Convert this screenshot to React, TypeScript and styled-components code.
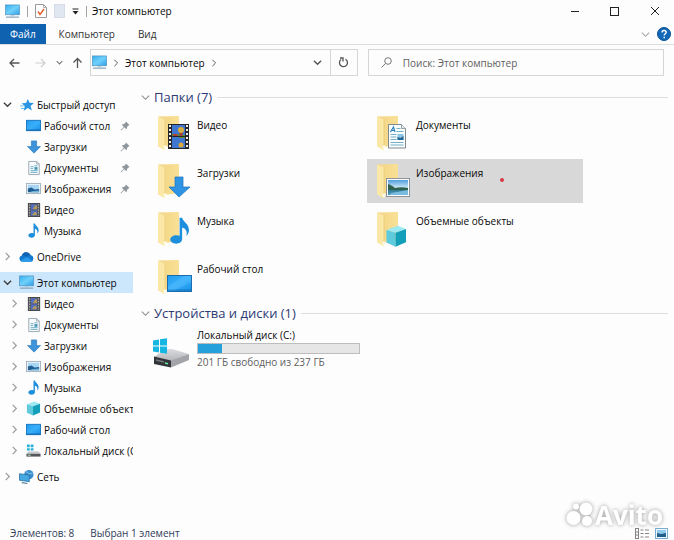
import React from "react";
import styled, { createGlobalStyle } from "styled-components";

const GlobalStyle = createGlobalStyle`
  * { box-sizing: border-box; }
  html, body, #root { height: 100%; }
  body {
    margin: 0;
    background: #fdfdfd;
    color: #080808;
    font: 10px/20px "Open Sans", "Noto Sans", sans-serif;
  }
  button, input { font: inherit; color: inherit; }
  ul { list-style: none; margin: 0; padding: 0; }
`;

const PlainButton = styled.button`
  display: flex;
  align-items: center;
  justify-content: center;
  padding: 0;
  border: 0;
  background: none;
`;

const Svg = styled.svg`
  display: block;
  flex: none;
  overflow: visible;
`;

/* ---------- icons ---------- */

const Defs = () => (
  <Svg width="0" height="0" aria-hidden="true">
    <defs>
      <linearGradient id="screen" x1="0" y1="0" x2="1" y2="1">
        <stop offset="0" stopColor="#35aef0" />
        <stop offset="0.5" stopColor="#6fd0fb" />
        <stop offset="1" stopColor="#2f9fe6" />
      </linearGradient>
      <linearGradient id="desk" x1="0" y1="0" x2="1" y2="1">
        <stop offset="0" stopColor="#1f9bf0" />
        <stop offset="0.5" stopColor="#3aaff9" />
        <stop offset="1" stopColor="#1590ea" />
      </linearGradient>
      <linearGradient id="folder" x1="0" y1="0" x2="1" y2="0">
        <stop offset="0" stopColor="#f3d583" />
        <stop offset="1" stopColor="#f9e096" />
      </linearGradient>
      <linearGradient id="sky" x1="0" y1="0" x2="0" y2="1">
        <stop offset="0" stopColor="#4f9ddb" />
        <stop offset="0.5" stopColor="#cbe7f5" />
        <stop offset="0.6" stopColor="#2f6f86" />
        <stop offset="1" stopColor="#4b9fc4" />
      </linearGradient>
      <linearGradient id="metal" x1="0" y1="0" x2="0" y2="1">
        <stop offset="0" stopColor="#dcdcdf" />
        <stop offset="1" stopColor="#b4b5b9" />
      </linearGradient>
    </defs>
  </Svg>
);

type ChevronProps = { dir: "right" | "down"; size?: number; color?: string; weight?: number };
const Chevron = ({ dir, size = 9, color = "#8c8c8c", weight = 1.2 }: ChevronProps) => (
  <Svg width={size} height={size} viewBox="0 0 10 10" fill="none" stroke={color} strokeWidth={weight} aria-hidden="true">
    <path d={dir === "right" ? "M3 1l4 4-4 4" : "M1 3l4 4 4-4"} />
  </Svg>
);

const PcIcon = () => (
  <Svg width="15" height="15" viewBox="0 0 16 16" aria-hidden="true">
    <rect x="0.5" y="1" width="15" height="10.5" fill="url(#screen)" stroke="#4d8fbd" strokeWidth="0.7" />
    <path d="M6 12h4v1H6z" fill="#a9c4d6" />
    <path d="M1 14h14" stroke="#7c9db5" strokeWidth="1.2" />
  </Svg>
);

const StarIcon = () => (
  <Svg width="14" height="14" viewBox="0 0 16 16" aria-hidden="true">
    <path d="M9 1l1.900 4.500 5 .3-3.800 3.300 1.400 5.200L9 11.500l-4.800 3 1.200-5.200L2 6l4.900-.4z" fill="#2a94e2" />
    <path d="M0 9h4M1 12h3.500" stroke="#58b2ee" />
  </Svg>
);

const DesktopIcon = () => (
  <Svg width="15" height="15" viewBox="0 0 16 16" aria-hidden="true">
    <rect x="0.5" y="2.5" width="15" height="11" fill="url(#desk)" stroke="#1876bd" />
    <path d="M1 12.800h14" stroke="#0c5c9d" strokeWidth="0.8" />
  </Svg>
);

const DownloadIcon = () => (
  <Svg width="14" height="14" viewBox="0 0 16 16" aria-hidden="true">
    <path d="M5 1h6v6.500h4.500L8 15 .5 7.500H5z" fill="#3f93d8" stroke="#2779bd" strokeWidth="0.7" />
  </Svg>
);

const DocumentIcon = () => (
  <Svg width="14" height="14" viewBox="0 0 16 16" aria-hidden="true">
    <path d="M2 .5h9l3 3v12H2z" fill="#f7fbfd" stroke="#87969f" strokeWidth="0.9" />
    <path d="M11 .5v3h3" fill="none" stroke="#87969f" strokeWidth="0.8" />
    <path d="M4 6.500h3.500M4 8.500h3M8.500 5.500h3.500M4 11h8M4 13h8" stroke="#5ca5bd" />
    <path d="M8.500 7h3.500v3H8.500z" fill="#3e93b5" />
  </Svg>
);

const PictureIcon = () => (
  <Svg width="15" height="15" viewBox="0 0 16 16" aria-hidden="true">
    <rect x="0.5" y="2.5" width="15" height="11" fill="#f5f9fc" stroke="#8fa0ad" strokeWidth="0.8" />
    <rect x="2" y="4" width="12" height="8" fill="#a7d5f4" />
    <path d="M2 8l4-1 3 2 5-.5V12H2z" fill="#245f94" />
    <path d="M6 11l8-1v2H5z" fill="#6db3dc" />
  </Svg>
);

const VideoIcon = () => (
  <Svg width="14" height="14" viewBox="0 0 16 16" aria-hidden="true">
    <rect x="1.5" y="0.5" width="13" height="15" fill="#55565c" stroke="#3e3f45" />
    <rect x="4.5" y="1.5" width="7" height="6" fill="#526fc1" />
    <rect x="4.5" y="8.5" width="7" height="6" fill="#526fc1" />
    <path d="M7 6l3-4 1.500 2v3H7zM6 13l3-3 2 1v3H6z" fill="#b49b59" />
    <path d="M3 1.500v13M13 1.500v13" stroke="#d5d5d5" strokeDasharray="1.500 1.500" />
  </Svg>
);

const NotePath = () => (
  <path d="M8 .5h1.500c.4 2.500 4.200 3.500 4 7.500-.1 1.500-.7 2.500-1.500 3.200.7-2.700-.4-4.400-2.500-5V13c0 1.700-1.700 2.700-3.500 2.700S2.500 14.700 2.500 13.300c0-1.900 2.800-3.200 5.500-2.200z" fill="#1d8fdc" />
);
const MusicIcon = () => (
  <Svg width="15" height="15" viewBox="0 0 16 16" aria-hidden="true"><NotePath /></Svg>
);

const CubeShapes = () => (
  <>
    <path d="M1 3.500L9 .5l6 2.300L7.500 5.500z" fill="#9ce9f2" />
    <path d="M1 3.500l6.500 2v10L1 12.500z" fill="#5fcadb" />
    <path d="M15 2.800L7.500 5.500v10L15 12.300z" fill="#149fb9" />
  </>
);
const CubeIcon = () => (
  <Svg width="15" height="15" viewBox="0 0 16 16" aria-hidden="true"><CubeShapes /></Svg>
);

const CloudIcon = () => (
  <Svg width="15" height="15" viewBox="0 0 16 16" aria-hidden="true">
    <path d="M3.500 13.500A3.300 3.300 0 0 1 3 7a5 5 0 0 1 9.300-.7 3.700 3.700 0 0 1 .4 7.200z" fill="#1379cf" />
    <path d="M3 7a5 5 0 0 1 9.300-.7c-2 .2-3 1-3.800 2.200C7 7.300 5 6.600 3 7z" fill="#0f62b1" />
    <path d="M1.500 12.500l7-4 6 4.200c-.5.500-1 .8-1.800.8H3.500c-.8 0-1.500-.4-2-1z" fill="#2a9aea" />
  </Svg>
);

const MiniDiskIcon = () => (
  <Svg width="15" height="15" viewBox="0 0 16 16" aria-hidden="true">
    <path d="M1 1.500h3v3H1zM5 1.500h3v3H5zM1 5.500h3v2.500H1zM5 5.500h3v2.500H5z" fill="#25b2d8" />
    <path d="M2.500 9h11l2 2.500h-15z" fill="#c4c6c8" />
    <path d="M.5 11.500h15v3H.5z" fill="#55585b" />
    <path d="M2 13h3" stroke="#bfe6c8" />
  </Svg>
);

const NetworkIcon = () => (
  <Svg width="15" height="15" viewBox="0 0 16 16" aria-hidden="true">
    <circle cx="10.5" cy="6" r="5" fill="#3a8fcd" />
    <path d="M7.500 3c2 0 2 2 4 2s2-1 3-.5" stroke="#8fd3f2" fill="none" />
    <path d="M.5 5l10.500 1.500v7L.5 12z" fill="#44a9e3" stroke="#286e9f" strokeWidth="0.8" />
    <path d="M3 14.500l6 1" stroke="#56809b" strokeWidth="1.2" />
  </Svg>
);

const PinIcon = () => (
  <Svg width="10" height="10" viewBox="0 0 10 10" aria-hidden="true">
    <path d="M6 .5L9.500 4l-1 .4L7 6c.1 1-.1 1.700-.7 2.200L4.300 6.200 1 9.500.5 9l3.300-3.300-2-2C2.300 3.100 3 2.900 4 3l1.600-1.500z" fill="#8f969c" />
  </Svg>
);

const FolderBack = () => (
  <>
    <path d="M1 1.500L22 1v29L8 32z" fill="url(#folder)" />
    <path d="M1 1.500l7 3V35l-1.500-.5L1 31.500z" fill="#fbe7a6" />
    <path d="M8 4.500V32" stroke="#e9c870" strokeWidth="0.6" />
    <path d="M6 31.500L9.500 30v2.500L8 35z" fill="#fffbea" />
  </>
);

const overlays = {
  video: (
    <>
      <rect x="11" y="9" width="21" height="25" fill="#25262c" />
      <rect x="15" y="10" width="13" height="11" fill="#3f76cf" />
      <rect x="15" y="22" width="13" height="11" fill="#3f76cf" />
      <path d="M15 19h6l2 1h5v1H15zM22 22h6v1h-6z" fill="#5b8d35" />
      <circle cx="24" cy="15" r="3" fill="#d9ac3e" />
      <path d="M22 18h4l-1 3h-2zM16 19h4l1 2h-5z" fill="#a84034" />
      <circle cx="24" cy="30" r="2.5" fill="#dba83d" />
      <path d="M13 10v24M30 10v24" stroke="#f1f1e6" strokeWidth="2" strokeDasharray="2 2" />
    </>
  ),
  download: <path d="M18 14h8v10h7L22 34 12 24h6z" fill="#2e94e3" stroke="#1c74bd" strokeWidth="0.7" />,
  music: <g transform="translate(9 6) scale(1.700)"><NotePath /></g>,
  desktop: (
    <>
      <rect x="10.5" y="16.5" width="24" height="16" fill="url(#desk)" stroke="#1c6cab" />
      <path d="M11 31h23" stroke="#1170b9" />
      <path d="M11 27L27 17h7v6L18 31h-7z" fill="#5dc2ff" opacity="0.35" />
    </>
  ),
  document: (
    <>
      <path d="M12.500 9.500h13l4 4v19.500h-17z" fill="#fcfefe" stroke="#7e8a91" />
      <path d="M25.500 9.500v4h4" fill="#e6edf0" stroke="#7e8a91" strokeWidth="0.8" />
      <path d="M14.500 17l3-5 1.500 5M15.500 15.500h3" fill="none" stroke="#2a83bd" strokeWidth="1.2" />
      <path d="M20.500 13.500h4M20.500 16.500h7M14.500 19.500h6M14.500 22h6M14.500 24.500h6M14.500 27.500h13M14.500 30h13" stroke="#73aeca" />
      <path d="M21.500 19h6v6h-6z" fill="#8cc5e5" />
      <path d="M21.500 22l3 1 3-2v4h-6z" fill="#246591" />
    </>
  ),
  picture: (
    <>
      <rect x="10.5" y="15.5" width="23" height="18" fill="#fbfcfd" stroke="#8c9399" />
      <rect x="12" y="17" width="20" height="15" fill="url(#sky)" />
      <path d="M12 21c3 1 5 2 7 4 4-1 9-1 13 0v2H12z" fill="#2f624d" />
      <path d="M15 30l17-3v5H14z" fill="#79bcdd" />
    </>
  ),
  cube: <g transform="translate(9 14) scale(1.400)"><CubeShapes /></g>,
};
type FolderKind = keyof typeof overlays;

const FolderIcon = ({ kind }: { kind: FolderKind }) => (
  <Svg width="36" height="36" viewBox="0 0 36 36" aria-hidden="true">
    <FolderBack />
    {overlays[kind]}
  </Svg>
);

const DriveIcon = () => (
  <Svg width="38" height="32" viewBox="0 0 38 32" aria-hidden="true">
    <path d="M2 20l12-8h6l17 5-18 7z" fill="url(#metal)" />
    <path d="M1 3.500l6-1v6H1zM8 2.300l7-1v7.200H8zM1 9.500h6v6l-6-1zM8 9.500h7v7.200l-7-1z" fill="#16b6e2" />
    <path d="M2 19.500l17 4v7L2 27z" fill="#323439" />
    <path d="M19 23.500L37 17v6l-18 7.500z" fill="#a3a4a9" />
    <path d="M4 23l8 2" stroke="#73797b" strokeWidth="1.5" />
    <path d="M13 26l3 .7" stroke="#5ef0a0" strokeWidth="1.5" />
  </Svg>
);

/* ---------- window chrome ---------- */

const Window = styled.div`
  position: relative;
  display: flex;
  flex-direction: column;
  min-height: 100%;
  overflow: hidden;
`;

const TitleBar = styled.header`
  display: flex;
  align-items: center;
  height: 24px;
  padding: 0 14px 2px 5px;
`;

const QuickTools = styled.div`
  display: flex;
  align-items: center;
  gap: 7px;
`;

const Separator = styled.span`
  width: 1px;
  height: 11px;
  background: #a2a2a2;
`;

const Title = styled.h1`
  margin: 0 auto 0 5px;
  font-size: 10px;
  font-weight: 400;
  white-space: nowrap;
`;

const Captions = styled.div`
  display: flex;
  gap: 30px;
`;

const Ribbon = styled.nav`
  display: flex;
  align-items: stretch;
  height: 21px;
  padding-right: 3px;
  border-bottom: 1px solid #dcdcdc;
`;

const Tab = styled(PlainButton)<{ $active?: boolean }>`
  padding: 0 10px;
  margin-right: 3px;
  color: ${(p) => (p.$active ? "#fff" : "#333")};
  background: ${(p) => (p.$active ? "#0f62b0" : "none")};
`;

const RibbonEnd = styled.div`
  display: flex;
  align-items: center;
  gap: 7px;
  margin-left: auto;
`;

const NavRow = styled.div`
  display: flex;
  align-items: center;
  height: 35px;
  padding: 0 10px 0 8px;
`;

const NavButtons = styled.div`
  display: flex;
  align-items: center;
  gap: 9px;
  width: 82px;
  flex: none;
`;

const AddressBar = styled.div`
  display: flex;
  align-items: center;
  flex: 98 1 0;
  height: 27px;
  border: 1px solid #d6d6d6;
  padding-left: 1px;
`;

const Crumb = styled(PlainButton)`
  gap: 5px;
  margin-right: 5px;
  white-space: nowrap;
`;

const AddressDrop = styled(PlainButton)`
  width: 25px;
  margin-left: auto;
`;

const Refresh = styled(PlainButton)`
  width: 27px;
  height: 25px;
  border-left: 1px solid #d6d6d6;
`;

const SearchBox = styled.label`
  display: flex;
  align-items: center;
  flex: 100 1 0;
  gap: 11px;
  height: 27px;
  margin-left: 10px;
  padding: 0 12px;
  border: 1px solid #d6d6d6;
`;

const SearchInput = styled.input`
  flex: 1;
  min-width: 0;
  padding: 0;
  border: 0;
  outline: 0;
  background: none;
  &::placeholder { color: #606060; opacity: 1; }
`;

/* ---------- body ---------- */

const Body = styled.div`
  display: flex;
  flex: 1;
`;

const Sidebar = styled.aside`
  display: flex;
  flex-direction: column;
  gap: 5px;
  flex: none;
  width: 133px;
  padding-top: 14px;
  overflow: hidden;
`;

const TreeRow = styled(PlainButton)<{ $level: number; $selected?: boolean }>`
  justify-content: flex-start;
  gap: 3px;
  width: 100%;
  height: 21px;
  padding-left: ${(p) => (p.$level ? 10 : 3)}px;
  background: ${(p) => (p.$selected ? "#cce6fb" : "none")};
`;

const ArrowSlot = styled.span`
  flex: none;
  width: 13px;
`;

const IconSlot = styled.span`
  display: flex;
  justify-content: center;
  flex: none;
  width: 15px;
`;

const TreeLabel = styled.span`
  flex: 1;
  overflow: hidden;
  white-space: nowrap;
  text-align: left;
`;

const PinSlot = styled.span`
  padding-right: 3px;
`;

const Main = styled.main`
  flex: 1;
  min-width: 0;
  padding: 7px 6px 0 8px;
`;

const GroupHeader = styled.h2`
  display: flex;
  align-items: center;
  gap: 4px;
  margin: 0;
  color: #2c3a75;
  font-size: 13px;
  font-weight: 400;
  line-height: 20px;
  white-space: nowrap;
  &::after {
    content: "";
    flex: 1;
    height: 1px;
    margin-left: 1px;
    background: #dedede;
  }
`;

const Tiles = styled.ul`
  display: grid;
  grid-template-columns: repeat(auto-fill, 216px);
  gap: 4px 3px;
  padding: 4px 0 4px 7px;
`;

const Tile = styled(PlainButton)<{ $selected?: boolean }>`
  align-items: flex-start;
  justify-content: flex-start;
  gap: 4px;
  width: 100%;
  height: 44px;
  padding: 4px 0 0 9px;
  background: ${(p) => (p.$selected ? "#d8d8d8" : "none")};
`;

const Drive = styled(PlainButton)`
  align-items: flex-start;
  justify-content: flex-start;
  gap: 7px;
  padding: 4px 0 0 11px;
  text-align: left;
`;

const DriveArt = styled.span`
  padding-top: 10px;
`;

const DriveInfo = styled.span`
  display: flex;
  flex-direction: column;
  line-height: 16px;
`;

const Usage = styled.progress`
  appearance: none;
  width: 163px;
  height: 11px;
  border: 1px solid #bdbdbd;
  &::-webkit-progress-bar { background: #e6e6e6; }
  &::-webkit-progress-value { background: #26a0da; }
`;

const Muted = styled.span`
  color: #606060;
`;

const StatusBar = styled.footer`
  display: flex;
  align-items: center;
  gap: 16px;
  height: 14px;
  padding: 0 6px 0 10px;
  color: #303c5a;
  line-height: 14px;
`;

const ViewButtons = styled.span`
  display: flex;
  gap: 6px;
  margin-left: auto;
`;

const RedDot = styled.span`
  width: 4px;
  height: 4px;
  margin: 15px 0 0 13px;
  border-radius: 50%;
  background: #d83a48;
`;

const Watermark = styled.div`
  position: absolute;
  right: 11px;
  bottom: 9px;
  display: flex;
  align-items: center;
  gap: 1px;
  color: #fff;
  font: 700 26px/32px "Open Sans", sans-serif;
  filter: drop-shadow(0 0 2px #999);
  pointer-events: none;
`;

type Item = { label: string; icon: React.ReactNode; open?: boolean; arrow?: boolean; pinned?: boolean; selected?: boolean };

const groups: Item[][] = [
  [
    { label: "Быстрый доступ", icon: <StarIcon />, open: true, arrow: true },
    { label: "Рабочий стол", icon: <DesktopIcon />, pinned: true },
    { label: "Загрузки", icon: <DownloadIcon />, pinned: true },
    { label: "Документы", icon: <DocumentIcon />, pinned: true },
    { label: "Изображения", icon: <PictureIcon />, pinned: true },
    { label: "Видео", icon: <VideoIcon /> },
    { label: "Музыка", icon: <MusicIcon /> },
  ],
  [{ label: "OneDrive", icon: <CloudIcon />, arrow: true }],
  [
    { label: "Этот компьютер", icon: <PcIcon />, open: true, arrow: true, selected: true },
    { label: "Видео", icon: <VideoIcon />, arrow: true },
    { label: "Документы", icon: <DocumentIcon />, arrow: true },
    { label: "Загрузки", icon: <DownloadIcon />, arrow: true },
    { label: "Изображения", icon: <PictureIcon />, arrow: true },
    { label: "Музыка", icon: <MusicIcon />, arrow: true },
    { label: "Объемные объекты", icon: <CubeIcon />, arrow: true },
    { label: "Рабочий стол", icon: <DesktopIcon />, arrow: true },
    { label: "Локальный диск (C:)", icon: <MiniDiskIcon />, arrow: true },
  ],
  [{ label: "Сеть", icon: <NetworkIcon />, arrow: true }],
];

const folders: { label: string; kind: FolderKind; selected?: boolean }[] = [
  { label: "Видео", kind: "video" },
  { label: "Документы", kind: "document" },
  { label: "Загрузки", kind: "download" },
  { label: "Изображения", kind: "picture", selected: true },
  { label: "Музыка", kind: "music" },
  { label: "Объемные объекты", kind: "cube" },
  { label: "Рабочий стол", kind: "desktop" },
];

export default function App() {
  return (
    <Window>
      <GlobalStyle />
      <TitleBar>
        <QuickTools>
          <PcIcon />
          <Separator />
          <PlainButton aria-label="Свойства">
            <Svg width="12" height="14" viewBox="0 0 12 14">
              <path d="M.5.500h8l3 3v10H.5z" fill="#fff" stroke="#9a9a9a" />
              <path d="M8.500.500v3h3" fill="none" stroke="#9a9a9a" strokeWidth="0.8" />
              <path d="M3 7.500l2 3 4-5.500" fill="none" stroke="#e2622d" strokeWidth="1.5" />
            </Svg>
          </PlainButton>
          <PlainButton aria-label="Новая папка">
            <Svg width="11" height="14" viewBox="0 0 11 14">
              <rect x="0.5" y="0.5" width="10" height="13" fill="#e0e7f1" stroke="#d3dce8" />
            </Svg>
          </PlainButton>
          <PlainButton aria-label="Настройка панели">
            <Svg width="7" height="7" viewBox="0 0 7 7">
              <path d="M.5 1h6" stroke="#222" />
              <path d="M.5 3h6l-3 3.500z" fill="#222" />
            </Svg>
          </PlainButton>
          <Separator />
        </QuickTools>
        <Title>Этот компьютер</Title>
        <Captions>
          <PlainButton aria-label="Свернуть">
            <Svg width="10" height="10" viewBox="0 0 10 10"><path d="M1 5.500h8" stroke="#222" /></Svg>
          </PlainButton>
          <PlainButton aria-label="Развернуть">
            <Svg width="10" height="10" viewBox="0 0 10 10"><rect x="0.5" y="1.5" width="8" height="8" fill="none" stroke="#222" /></Svg>
          </PlainButton>
          <PlainButton aria-label="Закрыть">
            <Svg width="10" height="10" viewBox="0 0 10 10"><path d="M1 1l8 8M9 1L1 9" stroke="#222" /></Svg>
          </PlainButton>
        </Captions>
      </TitleBar>

      <Ribbon>
        <Tab $active>Файл</Tab>
        <Tab>Компьютер</Tab>
        <Tab>Вид</Tab>
        <RibbonEnd>
          <PlainButton aria-label="Развернуть ленту"><Chevron dir="down" color="#a4a4a4" /></PlainButton>
          <PlainButton aria-label="Справка">
            <Svg width="14" height="14" viewBox="0 0 14 14">
              <circle cx="7" cy="7" r="6.5" fill="#1167b8" stroke="#0c4f90" />
              <path d="M5 5.500c0-2.800 4.200-2.600 4.200-.2C9.200 6.800 7.200 6.700 7.200 8.500M7.200 9.700v1.500" fill="none" stroke="#fff" strokeWidth="1.4" />
            </Svg>
          </PlainButton>
        </RibbonEnd>
      </Ribbon>

      <NavRow>
        <NavButtons>
          <PlainButton aria-label="Назад">
            <Svg width="12" height="12" viewBox="0 0 12 12" fill="none" stroke="#555" strokeWidth="1.3"><path d="M11.500 6H2M6 2L2 6l4 4" /></Svg>
          </PlainButton>
          <PlainButton aria-label="Вперёд">
            <Svg width="18" height="12" viewBox="0 0 18 12" fill="none" stroke="#cfcfcf" strokeWidth="1.2"><path d="M6.500 6H16M12 2l4 4-4 4" /></Svg>
          </PlainButton>
          <PlainButton aria-label="Последние расположения"><Chevron dir="down" size={7} color="#777" weight={1.5} /></PlainButton>
          <PlainButton aria-label="Вверх">
            <Svg width="11" height="12" viewBox="0 0 11 12" fill="none" stroke="#555" strokeWidth="1.3"><path d="M5.500 11V1.500M1.500 5.500l4-4 4 4" /></Svg>
          </PlainButton>
        </NavButtons>
        <AddressBar>
          <Crumb><PcIcon /><Chevron dir="right" size={8} color="#555" /></Crumb>
          <Crumb>Этот компьютер<Chevron dir="right" size={8} color="#555" /></Crumb>
          <AddressDrop aria-label="Предыдущие расположения"><Chevron dir="down" color="#555" weight={1.6} /></AddressDrop>
          <Refresh aria-label="Обновить">
            <Svg width="11" height="11" viewBox="0 0 11 11" fill="none" stroke="#555" strokeWidth="1.3">
              <path d="M7.500 2.200A4 4 0 1 1 3 2.500M2 1h3v3.500" />
            </Svg>
          </Refresh>
        </AddressBar>
        <SearchBox>
          <Svg width="11" height="11" viewBox="0 0 11 11" fill="none" stroke="#777" aria-hidden="true">
            <circle cx="7" cy="4" r="3.3" /><path d="M4.600 6.400L.5 10.500" />
          </Svg>
          <SearchInput type="search" aria-label="Поиск" placeholder="Поиск: Этот компьютер" />
        </SearchBox>
      </NavRow>

      <Body>
        <Sidebar>
          {groups.map((group, g) => (
            <ul key={g}>
              {group.map((item, i) => (
                <li key={item.label}>
                  <TreeRow $level={i ? 1 : 0} $selected={item.selected}>
                    <ArrowSlot>
                      {item.arrow && <Chevron dir={item.open ? "down" : "right"} color={item.open ? "#404040" : "#9a9a9a"} weight={item.open ? 1.6 : 1.3} />}
                    </ArrowSlot>
                    <IconSlot>{item.icon}</IconSlot>
                    <TreeLabel>{item.label}</TreeLabel>
                    {item.pinned && <PinSlot><PinIcon /></PinSlot>}
                  </TreeRow>
                </li>
              ))}
            </ul>
          ))}
        </Sidebar>

        <Main>
          <section>
            <GroupHeader><Chevron dir="down" />Папки (7)</GroupHeader>
            <Tiles>
              {folders.map((f) => (
                <li key={f.label}>
                  <Tile $selected={f.selected}>
                    <FolderIcon kind={f.kind} />
                    {f.label}
                    {f.selected && <RedDot />}
                  </Tile>
                </li>
              ))}
            </Tiles>
          </section>
          <section>
            <GroupHeader><Chevron dir="down" />Устройства и диски (1)</GroupHeader>
            <Drive>
              <DriveArt><DriveIcon /></DriveArt>
              <DriveInfo>
                <span>Локальный диск (C:)</span>
                <Usage aria-label="Занято на диске" value={36} max={237} />
                <Muted>201 ГБ свободно из 237 ГБ</Muted>
              </DriveInfo>
            </Drive>
          </section>
        </Main>
      </Body>

      <StatusBar>
        <span>Элементов: 8</span>
        <span>Выбран 1 элемент</span>
        <ViewButtons>
          <PlainButton aria-label="Таблица">
            <Svg width="14" height="11" viewBox="0 0 14 11" fill="none" stroke="#858585">
              <rect x="0.5" y="0.5" width="3" height="10" /><path d="M0 4h4M0 7h4M5.500 2h3M10 2h4M5.500 5.500h3M10 5.500h4M5.500 9h3M10 9h4" />
            </Svg>
          </PlainButton>
          <PlainButton aria-label="Крупные значки">
            <Svg width="13" height="11" viewBox="0 0 13 11">
              <rect x="0.5" y="0.5" width="12" height="10" fill="#f2f9fe" stroke="#79aed2" />
              <path d="M2 2h9v7H2z" fill="#93cbee" /><path d="M2 5l4 1 5-1v4H2z" fill="#235f8d" />
            </Svg>
          </PlainButton>
        </ViewButtons>
      </StatusBar>
      <Watermark>
        <Svg width="28" height="26" viewBox="0 0 28 26" fill="#fff" aria-hidden="true">
          <circle cx="20" cy="7" r="6.5" /><circle cx="7.5" cy="16" r="7" /><circle cx="10" cy="4.5" r="3" /><circle cx="21" cy="19" r="5" />
        </Svg>
        Avito
      </Watermark>
      <Defs />
    </Window>
  );
}
